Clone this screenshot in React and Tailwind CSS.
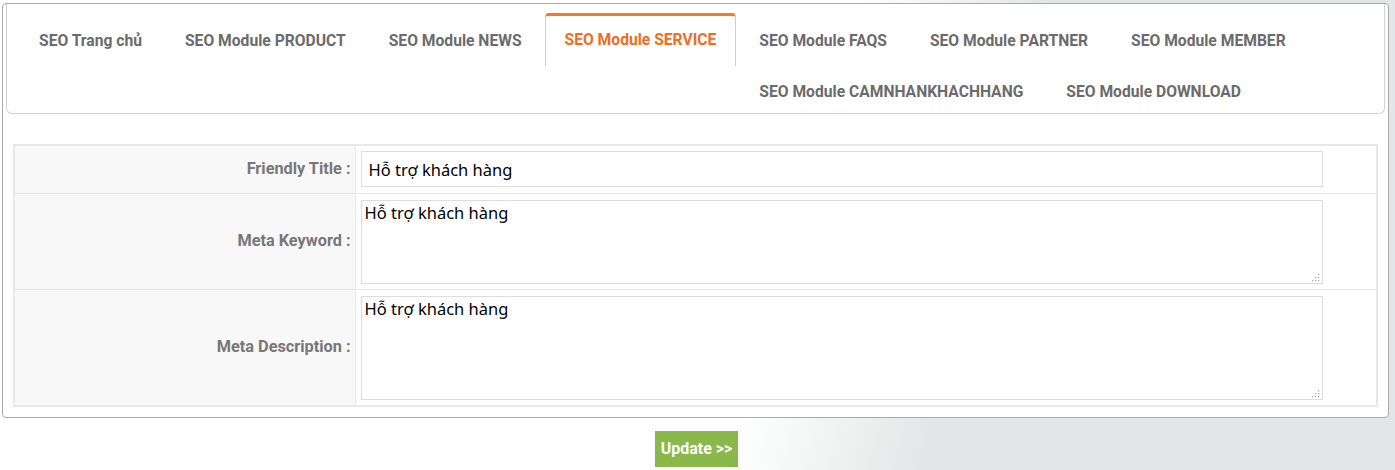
import React from "react";

const tabs = [
  "SEO Trang chủ",
  "SEO Module PRODUCT",
  "SEO Module NEWS",
  "SEO Module SERVICE",
  "SEO Module FAQS",
  "SEO Module PARTNER",
  "SEO Module MEMBER",
  "SEO Module CAMNHANKHACHHANG",
  "SEO Module DOWNLOAD",
];

function Tab({ label, active }) {
  return (
    <div
      className={
        "float-left mr-[3px] px-[19px] border text-[15.65px] leading-[48px] font-bold whitespace-nowrap " +
        (active
          ? "h-[53px] pb-[2px] border-[#cfcfcf] border-t-[3px] border-t-[#f47a2b] border-b-0 rounded-t-[4px] text-[#f26c22] bg-white"
          : "h-[51px] pt-[3px] border-transparent text-[#6b6b6b]")
      }
    >
      {label}
    </div>
  );
}

function Grip() {
  return (
    <svg
      className="absolute right-[3px] bottom-[2px]"
      width="8"
      height="8"
      viewBox="0 0 8 8"
    >
      <g fill="#a0a0a0">
        <rect x="6" y="0" width="1.2" height="1.2" />
        <rect x="3" y="3" width="1.2" height="1.2" />
        <rect x="6" y="3" width="1.2" height="1.2" />
        <rect x="0" y="6" width="1.2" height="1.2" />
        <rect x="3" y="6" width="1.2" height="1.2" />
        <rect x="6" y="6" width="1.2" height="1.2" />
      </g>
    </svg>
  );
}

const labelCls =
  "bg-[#f8f8f8] border border-[#e8e8e8] text-right pr-[4px] text-[16.3px] font-bold text-[#777]";

export default function App() {
  const inputFont = { fontFamily: '"Noto Sans", "Open Sans", sans-serif' };
  return (
    <div
      className="w-[1395px] h-[470px] pt-[3px] pl-[2px] bg-[linear-gradient(105deg,#ffffff_56%,#e3e6e6_69%)]"
      style={{ fontFamily: 'Roboto, "Liberation Sans", sans-serif' }}
    >
      <div className="w-[1387px] border border-[#a9a9a9] rounded-[4px] bg-white">
        <div className="mx-[3px] h-[110px] border-x border-b border-[#d2d2d2] rounded-b-[6px] pl-[12px] pt-[9px]">
          {tabs.map((t) => (
            <Tab key={t} label={t} active={t === "SEO Module SERVICE"} />
          ))}
        </div>
        <div className="pt-[30px] pb-[10px] pl-[10px]">
          <table className="w-[1365px] border-collapse border-2 border-[#e8e8e8]">
            <tbody>
              <tr>
                <td className={labelCls + " w-[341px]"}>Friendly Title :</td>
                <td className="border border-[#e8e8e8] pl-[5px] pt-[5px] pb-[6px]">
                  <input
                    readOnly
                    value="Hỗ trợ khách hàng"
                    className="block w-[962px] h-[36px] border border-[#dcdcdc] px-[7px] text-[16.5px] text-black outline-none"
                    style={inputFont}
                  />
                </td>
              </tr>
              <tr>
                <td className={labelCls}>Meta Keyword :</td>
                <td className="border border-[#e8e8e8] pl-[5px] pt-[6px] pb-[5px]">
                  <div className="relative w-[962px]">
                    <textarea
                      readOnly
                      value="Hỗ trợ khách hàng"
                      className="block w-[962px] h-[84px] resize-none border border-[#dcdcdc] px-[3px] py-0 text-[16.5px] leading-[24px] text-black outline-none"
                      style={inputFont}
                    />
                    <Grip />
                  </div>
                </td>
              </tr>
              <tr>
                <td className={labelCls}>Meta Description :</td>
                <td className="border border-[#e8e8e8] pl-[5px] pt-[6px] pb-[5px]">
                  <div className="relative w-[962px]">
                    <textarea
                      readOnly
                      value="Hỗ trợ khách hàng"
                      className="block w-[962px] h-[104px] resize-none border border-[#dcdcdc] px-[3px] py-0 text-[16.5px] leading-[24px] text-black outline-none"
                      style={inputFont}
                    />
                    <Grip />
                  </div>
                </td>
              </tr>
            </tbody>
          </table>
        </div>
      </div>
      <div className="flex justify-center pt-[13px] pr-[4px]">
        <button className="h-[36px] px-[6px] bg-[#8bb84a] text-white text-[16px] font-bold">
          Update &gt;&gt;
        </button>
      </div>
    </div>
  );
}
